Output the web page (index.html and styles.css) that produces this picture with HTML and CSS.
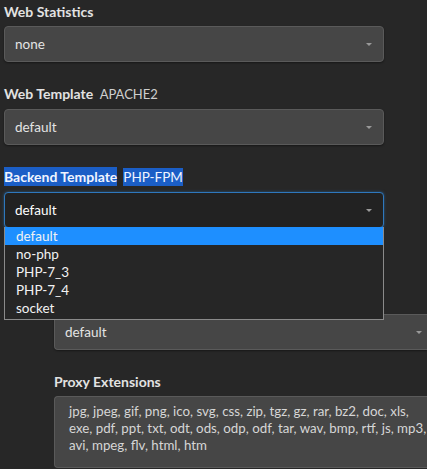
FILE: index.html
```html
<!DOCTYPE html>
<html lang="en">
<head>
    <meta charset="UTF-8">
    <meta name="viewport" content="width=device-width, initial-scale=1.0">
    <title>Edit Web Domain</title>
    <link rel="stylesheet" href="styles.css">
</head>
<body>
    <div class="form">
        <div class="field">
            <label class="label">Web Statistics</label>
            <div class="select"><span>none</span><i class="arrow"></i></div>
        </div>
        <div class="field">
            <label class="label">Web Template <span class="hint">APACHE2</span></label>
            <div class="select"><span>default</span><i class="arrow"></i></div>
        </div>
        <div class="field backend">
            <label class="label"><span class="sel">Backend Template</span><span class="gap"></span><span class="sel hint">PHP-FPM</span></label>
            <div class="select focus"><span>default</span><i class="arrow"></i></div>
            <ul class="dropdown">
                <li class="active">default</li>
                <li>no-php</li>
                <li>PHP-7_3</li>
                <li>PHP-7_4</li>
                <li>socket</li>
            </ul>
        </div>
        <div class="proxy">
            <div class="field">
                <label class="label covered">Proxy Template</label>
                <div class="select wide"><span>default</span><i class="arrow"></i></div>
            </div>
            <div class="field">
                <label class="label">Proxy Extensions</label>
                <div class="textarea">jpg, jpeg, gif, png, ico, svg, css, zip, tgz, gz, rar, bz2, doc, xls, exe, pdf, ppt, txt, odt, ods, odp, odf, tar, wav, bmp, rtf, js, mp3, avi, mpeg, flv, html, htm</div>
            </div>
        </div>
    </div>
</body>
</html>
```
FILE: styles.css
```css
*{
    padding:0;
    margin:0;
    box-sizing:border-box;
}
body{
    background-color:#272727;
    font-family:Lato, "Open Sans", sans-serif;
    color:#ddd;
    overflow:hidden;
}
.form{
    padding:2px 4px 0 4px;
}
.field{
    position:relative;
    margin-bottom:22px;
}
.label{
    display:block;
    font-size:14px;
    font-weight:700;
    color:#e2e2e2;
    line-height:19px;
    margin-bottom:5px;
}
.label.covered{
    visibility:hidden;
}
.hint{
    font-weight:400;
    font-size:13px;
    color:#cfcfcf;
    margin-left:3px;
}
.sel{
    background-color:#1b5ec6;
    color:#f0f4ff;
    padding:1px 0;
}
.gap{
    display:inline-block;
    width:6px;
}
.sel.hint{
    margin-left:0;
    font-size:13.5px;
}
.select{
    position:relative;
    width:380px;
    height:36px;
    background-color:#464646;
    border:1px solid #5a5a5a;
    border-radius:4px;
    padding:0 10px;
    display:flex;
    align-items:center;
    font-size:13.5px;
    color:#e4e4e4;
    box-shadow:0 1px 2px rgba(0,0,0,.4);
}
.select.focus{
    background-color:#222;
    border-color:#2e78bd;
    box-shadow:0 0 3px rgba(46,120,189,.6);
    color:#fff;
}
.arrow{
    position:absolute;
    right:11px;
    top:16px;
    width:0;
    height:0;
    border-left:3px solid transparent;
    border-right:3px solid transparent;
    border-top:3px solid #9a9a9a;
}
.dropdown{
    position:absolute;
    left:0;
    top:60px;
    width:380px;
    list-style:none;
    background-color:#262626;
    border:1px solid #8a8a8a;
    border-top:none;
    z-index:5;
    padding-bottom:2px;
}
.dropdown li{
    height:18px;
    line-height:18px;
    padding-left:11px;
    font-size:13.5px;
    color:#f2f2f2;
}
.dropdown li.active{
    background-color:#1e8fff;
}
.backend{
    margin-bottom:62px;
}
.proxy{
    padding-left:50px;
}
.select.wide{
    width:373px;
    border-right:none;
    border-radius:4px 0 0 4px;
}
.select.wide .arrow{
    right:5px;
}
.textarea{
    width:373px;
    height:72px;
    background-color:#464646;
    border:1px solid #5a5a5a;
    border-right:none;
    border-radius:4px 0 0 4px;
    padding:6px 0 6px 14px;
    font-size:13.3px;
    line-height:17px;
    color:#d6d6d6;
}
```
